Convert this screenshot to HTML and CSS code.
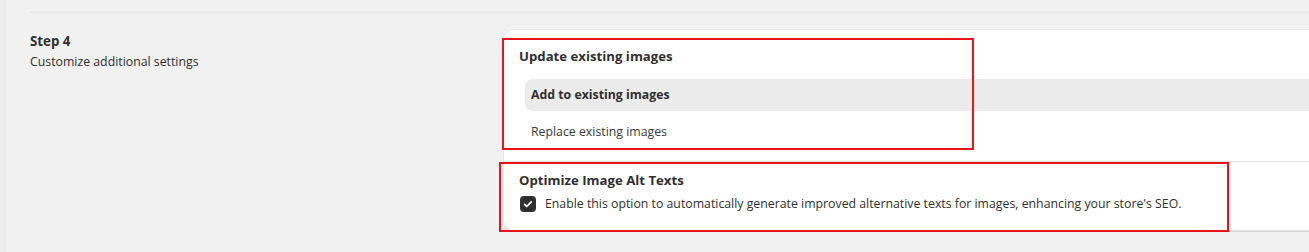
FILE: index.html
```html
<!DOCTYPE html>
<html lang="en">

<head>
    <meta charset="UTF-8">
    <title>Step 4 - Settings</title>
    <meta name="viewport" content="width=device-width, initial-scale=1.0">
    <link rel="stylesheet" href="styles.css">
</head>

<body>
    <div class="page">
        <div class="rail"></div>
        <div class="content">
            <div class="divider"></div>
            <div class="step">
                <div class="step-info">
                    <div class="step-title">Step 4</div>
                    <div class="step-desc">Customize additional settings</div>
                </div>

                <div class="card">
                    <div class="section">
                        <div class="section-title">Update existing images</div>
                        <div class="options">
                            <div class="option selected">Add to existing images</div>
                            <div class="option">Replace existing images</div>
                        </div>
                    </div>
                    <div class="section section-alt">
                        <div class="section-title">Optimize Image Alt Texts</div>
                        <label class="check-row">
                            <span class="checkbox">
                                <svg viewBox="0 0 16 16" width="16" height="16"><path d="M4.6 8.3l2.2 2.2 4.4-4.6" fill="none" stroke="#fff" stroke-width="1.7" stroke-linecap="round" stroke-linejoin="round"/></svg>
                            </span>
                            Enable this option to automatically generate improved alternative texts for images, enhancing your store's SEO.
                        </label>
                    </div>

                    <!-- review markers -->
                    <div class="mark mark-one"></div>
                    <div class="mark mark-two"></div>
                </div>
            </div>
        </div>
    </div>
</body>

</html>
```

FILE: styles.css
```css
body {
    margin: 0;
    background: #f1f1f1;
    color: #303030;
    font-family: 'Open Sans', 'Noto Sans', sans-serif;
    font-size: 12.3px;
    line-height: 20px;
    overflow: hidden;
}

.page {
    display: flex;
    height: 252px;
}

.rail {
    width: 6px;
    flex-shrink: 0;
    background: #ebebeb;
}

.content {
    flex: 1;
    min-width: 0;
    padding-left: 24px;
    padding-top: 12px;
}

.divider {
    height: 1px;
    background: #e3e3e3;
}

.step {
    display: flex;
    padding-top: 16px;
}

.step-info {
    width: 473px;
    flex-shrink: 0;
    padding-top: 2px;
}

.step-title {
    font-weight: 700;
    font-size: 13.3px;
}

.step-desc {
    margin-top: 1px;
}

/* Card */
.card {
    position: relative;
    flex: 1;
    min-width: 0;
    background: #fff;
    border: 1px solid #e6e6e6;
    border-right: none;
    border-radius: 10px 0 0 10px;
    box-shadow: 0 1px 0 #d4d4d4;
    height: 202px;
    box-sizing: border-box;
}

.section {
    padding: 16px 0 14px 15px;
}

.section-title {
    font-weight: 700;
    font-size: 13.2px;
}

.options {
    margin-top: 13px;
    padding-left: 6px;
    display: flex;
    flex-direction: column;
    gap: 4px;
}

.option {
    height: 32px;
    line-height: 32px;
    padding-left: 6px;
    border-radius: 8px 0 0 8px;
    color: #3a3a3a;
}

.option + .option {
    line-height: 34px;
}

.option.selected {
    background: #ebebeb;
    font-weight: 700;
    color: #303030;
}

.section-alt {
    border-top: 1px solid #e3e3e3;
    padding-top: 8px;
}

.check-row {
    display: flex;
    align-items: center;
    gap: 9px;
    margin-top: 4px;
    padding-left: 1px;
}

.checkbox {
    width: 16px;
    height: 16px;
    border-radius: 4px;
    background: #303030;
    display: flex;
}

/* Red review markers */
.mark {
    position: absolute;
    border: 2px solid #e8141c;
    box-sizing: border-box;
}

.mark-one {
    left: -2px;
    top: 8px;
    width: 472px;
    height: 112px;
}

.mark-two {
    left: -5px;
    top: 132px;
    width: 730px;
    height: 70px;
}
```
